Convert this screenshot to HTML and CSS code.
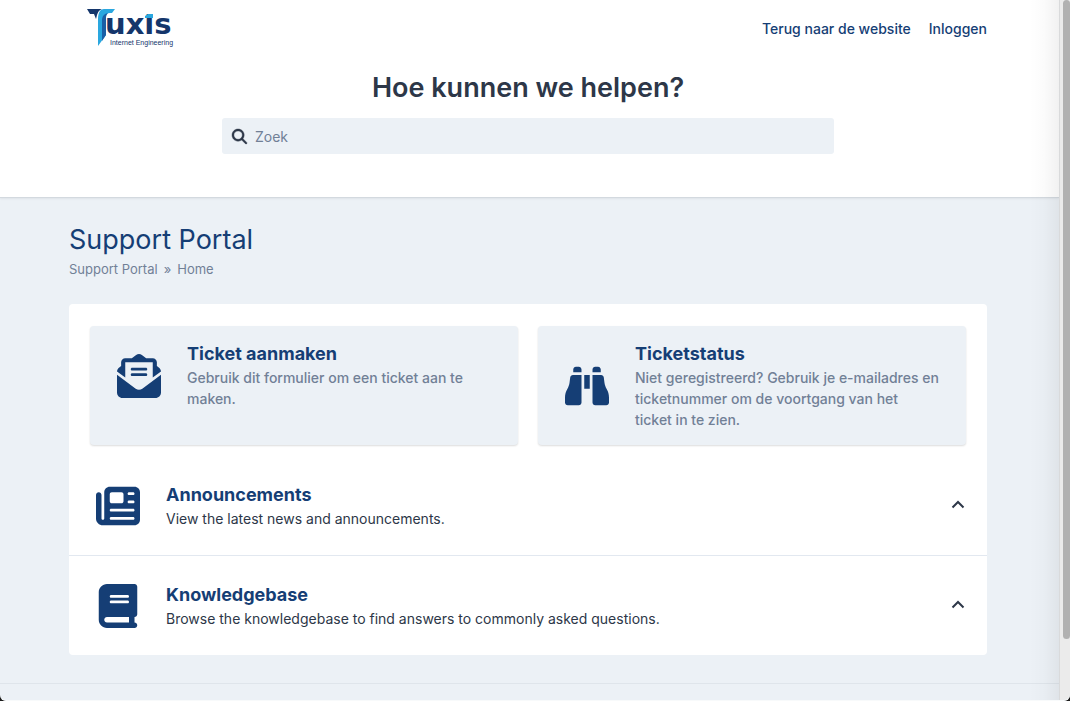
FILE: index.html
```
<!DOCTYPE html>
<html lang="nl">
<head>
<meta charset="utf-8">
<meta name="viewport" content="width=device-width, initial-scale=1">
<title>Support Portal</title>
<link rel="stylesheet" href="styles.css">
</head>
<body>
<div class="window">
  <div class="page">
    <header class="header">
      <div class="topbar">
        <a class="logo" href="#" aria-label="Tuxis Internet Engineering">
          <svg width="90" height="42" viewBox="0 0 90 42" aria-hidden="true">
            <path fill="#14366b" d="M0 2H15C12 3 11 5 10 8L9 12L7 7H3Z"/>
            <path fill="#2aa7df" d="M17 2H28L25 6H23C20 6 19 8 19 11V28L11 39V12C11 6 13 2 17 2Z"/>
            <path fill="#1b5fa6" d="M15 34V14C15 9 17 6 23 6C20 6 19 8 19 11V28Z"/>
            <text class="logo-name" x="18" y="27">uxis</text>
            <path fill="#fff" d="M57 3H67V7H57Z"/>
            <path fill="#2aa7df" d="M58 11V9L61 7H66V11Z"/>
            <text class="logo-tag" x="23" y="38">Internet Engineering</text>
          </svg>
        </a>
        <nav class="nav">
          <a href="#">Terug naar de website</a>
          <a href="#">Inloggen</a>
        </nav>
      </div>
      <h1 class="hero-title">Hoe kunnen we helpen?</h1>
      <form class="search">
        <label class="search-label" for="search">
          <svg width="15" height="15" viewBox="0 0 512 512" role="img" aria-label="Zoek"><path fill="currentColor" stroke="currentColor" stroke-width="14" d="M416 208c0 45.900-14.900 88.300-40 122.700L502.600 457.400c12.500 12.500 12.500 32.800 0 45.300s-32.800 12.500-45.300 0L330.700 376c-34.400 25.200-76.800 40-122.700 40C93.100 416 0 322.900 0 208S93.100 0 208 0S416 93.100 416 208zM208 352a144 144 0 1 0 0-288 144 144 0 1 0 0 288z"/></svg>
        </label>
        <input class="search-input" id="search" type="text" placeholder="Zoek">
      </form>
    </header>
    <main class="main">
      <h2 class="page-title">Support Portal</h2>
      <nav class="crumbs"><a href="#">Support Portal</a><span>»</span><a href="#">Home</a></nav>
      <div class="panel">
        <div class="cards">
          <a class="card" href="#">
            <svg class="icon" viewBox="0 0 512 512" aria-hidden="true"><path d="M215.400 96H96v177.400L.2 202.500c1.600-18.100 10.900-34.900 25.700-45.800L48 140.300V96c0-26.500 21.500-48 48-48h76.600l49.900-36.900C232.200 3.900 243.900 0 256 0s23.800 3.900 33.500 11L339.400 48H416c26.500 0 48 21.500 48 48v44.300l22.100 16.400c14.800 10.900 24.100 27.700 25.700 45.800L416 273.400V96H215.400zM0 448V242.100L217.600 403.300c11.100 8.200 24.600 12.700 38.400 12.700s27.300-4.400 38.400-12.700L512 242.100V448c0 35.300-28.700 64-64 64H64c-35.300 0-64-28.700-64-64zM176 160H336c8.800 0 16 7.200 16 16s-7.200 16-16 16H176c-8.800 0-16-7.200-16-16s7.200-16 16-16zm0 64H336c8.800 0 16 7.200 16 16s-7.200 16-16 16H176c-8.800 0-16-7.200-16-16s7.200-16 16-16z"/></svg>
            <div class="text">
              <h3 class="item-title">Ticket aanmaken</h3>
              <p class="muted">Gebruik dit formulier om een ticket aan te maken.</p>
            </div>
          </a>
          <a class="card" href="#">
            <svg class="icon" viewBox="0 0 512 512" aria-hidden="true"><path d="M128 32h32c17.700 0 32 14.300 32 32V96H96V64c0-17.700 14.300-32 32-32zm64 96V448c0 17.700-14.300 32-32 32H32c-17.700 0-32-14.300-32-32V388.900c0-34.600 9.400-68.600 27.200-98.300C40.900 267.800 49.700 242.400 53 216L60.500 156c2-16 15.600-28 31.800-28H192zm227.800 0c16.100 0 29.800 12 31.800 28L459 216c3.300 26.400 12.100 51.800 25.800 74.600c17.800 29.700 27.200 63.700 27.200 98.300V448c0 17.700-14.300 32-32 32H352c-17.700 0-32-14.300-32-32V128h99.800zM320 64c0-17.700 14.300-32 32-32h32c17.700 0 32 14.300 32 32V96H320V64zm-32 64V288H224V128h64z"/></svg>
            <div class="text">
              <h3 class="item-title">Ticketstatus</h3>
              <p class="muted">Niet geregistreerd? Gebruik je e-mailadres en ticketnummer om de voortgang van het ticket&nbsp;in te zien.</p>
            </div>
          </a>
        </div>
        <section class="row">
          <svg class="icon" viewBox="0 0 512 512" aria-hidden="true"><path d="M96 96c0-35.300 28.700-64 64-64H448c35.300 0 64 28.700 64 64V416c0 35.300-28.700 64-64 64H80c-44.200 0-80-35.800-80-80V128c0-17.700 14.300-32 32-32s32 14.300 32 32V400c0 8.800 7.200 16 16 16s16-7.200 16-16V96zm64 24v80c0 13.300 10.700 24 24 24H296c13.300 0 24-10.700 24-24V120c0-13.300-10.700-24-24-24H184c-13.300 0-24 10.700-24 24zm208-8c0 8.800 7.200 16 16 16h48c8.800 0 16-7.200 16-16s-7.200-16-16-16H384c-8.800 0-16 7.200-16 16zm0 96c0 8.800 7.200 16 16 16h48c8.800 0 16-7.200 16-16s-7.200-16-16-16H384c-8.800 0-16 7.200-16 16zM160 304c0 8.800 7.200 16 16 16H432c8.800 0 16-7.200 16-16s-7.200-16-16-16H176c-8.800 0-16 7.200-16 16zm0 96c0 8.800 7.200 16 16 16H432c8.800 0 16-7.200 16-16s-7.200-16-16-16H176c-8.800 0-16 7.200-16 16z"/></svg>
          <div class="text">
            <h3 class="item-title"><a href="#">Announcements</a></h3>
            <p>View the latest news and announcements.</p>
          </div>
          <button class="toggle" type="button" aria-label="Announcements"><svg width="14" height="12" viewBox="0 0 14 12"><path d="M1.500 7.500L7 2L12.500 7.500"/></svg></button>
        </section>
        <section class="row">
          <svg class="icon" viewBox="0 0 448 512" aria-hidden="true"><path d="M96 0C43 0 0 43 0 96V416c0 53 43 96 96 96H416c17.700 0 32-14.300 32-32s-14.300-32-32-32V384c17.700 0 32-14.300 32-32V32c0-17.700-14.300-32-32-32H96zm0 384H352v64H96c-17.700 0-32-14.300-32-32s14.300-32 32-32zm32-240c0-8.800 7.200-16 16-16H336c8.800 0 16 7.200 16 16s-7.200 16-16 16H144c-8.800 0-16-7.200-16-16zm16 48H336c8.800 0 16 7.200 16 16s-7.200 16-16 16H144c-8.800 0-16-7.200-16-16s7.200-16 16-16z"/></svg>
          <div class="text">
            <h3 class="item-title"><a href="#">Knowledgebase</a></h3>
            <p>Browse the knowledgebase to find answers to commonly asked questions.</p>
          </div>
          <button class="toggle" type="button" aria-label="Knowledgebase"><svg width="14" height="12" viewBox="0 0 14 12"><path d="M1.500 7.500L7 2L12.500 7.500"/></svg></button>
        </section>
      </div>
    </main>
    <footer class="footer"></footer>
  </div>
  <div class="scrollbar"><div class="thumb"></div></div>
</div>
</body>
</html>
```
FILE: styles.css
```
* { box-sizing: border-box; }
html { background: #1c1c1c; }
body {
  margin: 0;
  font: 14px/21px Inter, "Liberation Sans", sans-serif;
  color: #2d3748;
}
h1, h2, h3, p { margin: 0; }
a { color: #153e75; text-decoration: none; }

.window {
  display: flex;
  min-height: 100vh;
  background: #ecf1f6;
  border-bottom: 1px solid #f8fafb;
  border-radius: 0 0 6px 6px;
  overflow: hidden;
}
.page { flex: 1; display: flex; flex-direction: column; }

.header {
  padding: 7px 72px 43px 69px;
  background: #fff;
  border-bottom: 1px solid #d3d9df;
  box-shadow: 0 1px 2px rgba(0, 0, 0, 0.06);
}
.topbar { display: flex; justify-content: space-between; align-items: center; padding-left: 18px; }
.logo, .logo svg { display: block; }
.logo-name { font: bold 29px "DejaVu Sans", sans-serif; fill: #14366b; }
.logo-tag { font: 7px "Liberation Sans", sans-serif; fill: #14366b; }
.nav { display: flex; gap: 18px; font-weight: 500; }

.hero-title { margin-top: 22px; font-size: 27px; line-height: 34px; font-weight: 600; text-align: center; }
.search {
  display: flex;
  align-items: center;
  gap: 8px;
  width: 66.667%;
  height: 36px;
  margin: 13px auto 0;
  padding: 0 10px;
  background: #ecf1f6;
  border-radius: 3px;
}
.search-label, .search-label svg { display: block; }
.search-label svg { overflow: visible; }
.search-input { flex: 1; min-width: 0; padding: 0; border: 0; outline: 0; background: none; font: inherit; color: inherit; }
.search-input::placeholder { color: #718096; opacity: 1; }

.main { padding: 23px 72px 28px 69px; }
.page-title { font-size: 27px; line-height: 38px; font-weight: 400; color: #153e75; }
.crumbs { display: flex; gap: 6px; font-size: 13px; line-height: 20px; color: #718096; }
.crumbs a { color: inherit; }

.panel { margin-top: 25px; background: #fff; border-radius: 4px; overflow: hidden; }
.cards { display: grid; grid-template-columns: 1fr 1fr; gap: 20px; padding: 22px 21px 11px; }
.card {
  display: flex;
  flex-wrap: wrap;
  align-items: center;
  align-content: flex-start;
  gap: 26px;
  padding: 16px 22px 15px 27px;
  background: #ecf1f6;
  border-radius: 4px;
  box-shadow: 0 1px 2px rgba(0, 0, 0, 0.14);
}
.icon { flex: none; width: 44px; height: 44px; fill: #153e75; }
.text { flex: 1; min-width: 0; }
.item-title { margin-bottom: 1px; font-size: 18px; line-height: 24px; font-weight: 700; color: #153e75; }
.muted { font-weight: 500; color: #718096; }

.row { display: flex; align-items: center; gap: 26px; padding: 27px 22px 26px 27px; }
.row + .row { border-top: 1px solid #e2e8f0; }
.toggle { padding: 0; border: 0; background: none; cursor: pointer; }
.toggle svg { display: block; fill: none; stroke: #2d3748; stroke-width: 2; }

.footer { flex: 1; border-top: 1px solid #dfe5eb; }

.scrollbar { position: relative; flex: none; width: 11px; padding-left: 3px; background: #ebebeb; border-left: 1px solid #d9dadb; }
.scrollbar::before {
  content: "";
  position: absolute;
  top: 0;
  bottom: 0;
  left: -31px;
  width: 30px;
  background: linear-gradient(to right, transparent, rgba(0, 0, 0, 0.015) 50%, rgba(0, 0, 0, 0.055));
}
.thumb { height: 91.300%; background: #b1b1b1; border-radius: 4px; }
```
